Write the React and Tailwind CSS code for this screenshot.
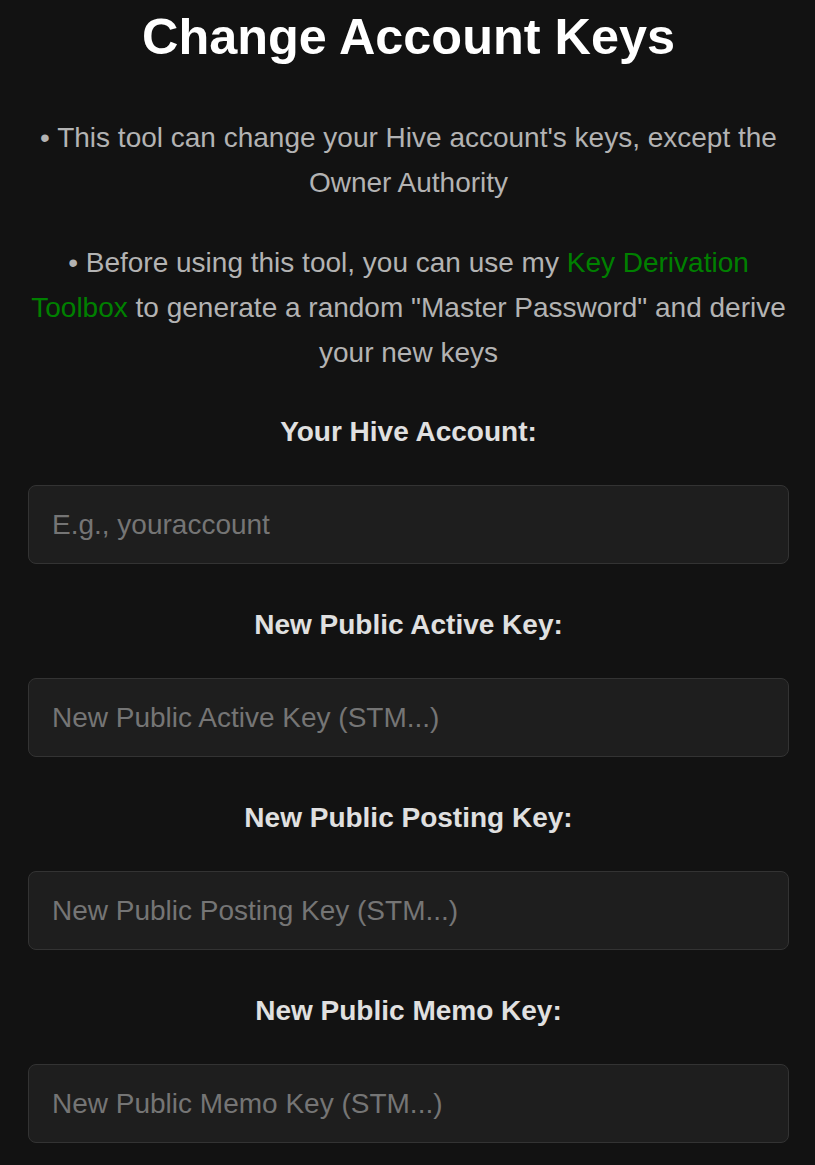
import React, { useState } from 'react'


const fields = [
    { label: 'Your Hive Account:', placeholder: 'E.g., youraccount' },
    { label: 'New Public Active Key:', placeholder: 'New Public Active Key (STM...)' },
    { label: 'New Public Posting Key:', placeholder: 'New Public Posting Key (STM...)' },
    { label: 'New Public Memo Key:', placeholder: 'New Public Memo Key (STM...)' },
]

const App = () => {

    const [values, setValues] = useState(fields.map(() => ''))

    const setValue = (i, v) => {
        const next = [...values]
        next[i] = v
        setValues(next)
    }

    return (
        <div className="min-h-[1165px] bg-[#121212] font-['Liberation_Sans',Arial,sans-serif]">
            <div className="pl-[28px] pr-[26px] pt-[9px] pb-10">

                <h1 className="text-center text-white text-[50.4px] font-bold leading-[56px]">
                    Change Account Keys
                </h1>

                <p className="mt-[50px] text-center text-[#b3b3b3] text-[28px] leading-[45px]">
                    • This tool can change your Hive account's keys, except the Owner Authority
                </p>

                <p className="mt-[35px] text-center text-[#b3b3b3] text-[28px] leading-[45px]">
                    • Before using this tool, you can use my{' '}
                    <a href="#" className="text-[#008000]">Key Derivation Toolbox</a>{' '}
                    to generate a random "Master Password" and derive your new keys
                </p>

                <form className="mt-[34px]" onSubmit={e => e.preventDefault()}>
                    {fields.map((f, i) => (
                        <div key={f.label} className="mb-[38px]">
                            <label htmlFor={'field_' + i} className="block text-center text-[#e0e0e0] text-[28px] font-bold leading-[45px]">
                                {f.label}
                            </label>
                            <input type="text" id={'field_' + i}
                                className="mt-[31px] block w-full h-[79px] px-[23px] rounded-lg border border-[#333333] bg-[#1e1e1e] text-[28px] text-[#e0e0e0] placeholder:text-[#757575] focus:outline-none"
                                placeholder={f.placeholder} value={values[i]}
                                onChange={e => setValue(i, e.target.value)}
                            />
                        </div>
                    ))}
                </form>

            </div>
        </div>
    )
}

export default App
